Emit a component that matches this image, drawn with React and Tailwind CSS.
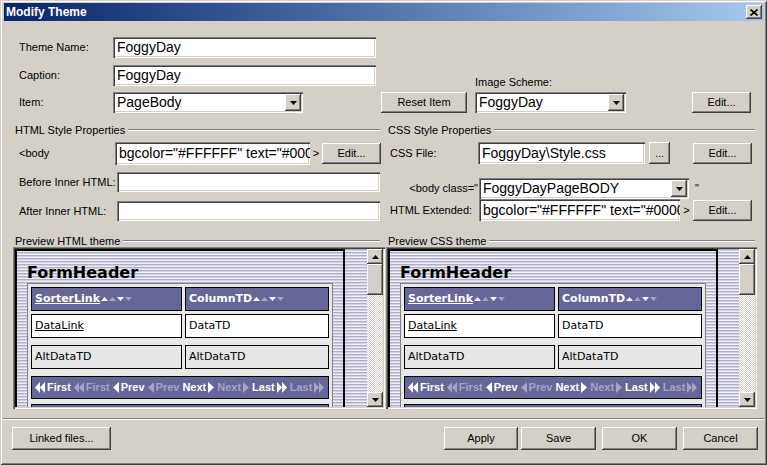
import React from 'react';

const raised =
  'bg-[#d4d0c8] shadow-[inset_-1px_-1px_0_#404040,inset_1px_1px_0_#ffffff,inset_-2px_-2px_0_#808080,inset_2px_2px_0_#d4d0c8]';
const sunken =
  'bg-white shadow-[inset_1px_1px_0_#808080,inset_2px_2px_0_#404040,inset_-1px_-1px_0_#ffffff,inset_-2px_-2px_0_#d4d0c8]';

const WHITE = '#ffffff';
const GRAY = '#a4a4c6';

function Button({ children, className = '' }) {
  return (
    <div className={`${raised} flex items-center justify-center text-[11px] text-black shrink-0 ${className}`}>
      {children}
    </div>
  );
}

function TextBox({ value = '', className = '' }) {
  return (
    <div className={`${sunken} flex items-center pl-[4px] overflow-hidden whitespace-nowrap text-[14px] text-black shrink-0 ${className}`}>
      {value}
    </div>
  );
}

function DownTri() {
  return (
    <svg width="7" height="4" viewBox="0 0 7 4">
      <polygon points="0,0 7,0 3.5,4" fill="#000" />
    </svg>
  );
}

function UpTri() {
  return (
    <svg width="7" height="4" viewBox="0 0 7 4">
      <polygon points="0,4 3.5,0 7,4" fill="#000" />
    </svg>
  );
}

function Select({ value, className = '' }) {
  return (
    <div className={`${sunken} flex items-center justify-between pl-[4px] text-[14px] text-black shrink-0 ${className}`}>
      <span className="whitespace-nowrap overflow-hidden">{value}</span>
      <div className={`${raised} w-[16px] h-[17px] mr-[2px] flex items-center justify-center`}>
        <DownTri />
      </div>
    </div>
  );
}

function GroupHeader({ title, className = '' }) {
  return (
    <div className={`flex items-center h-[12px] ${className}`}>
      <span className="text-[11px] leading-[12px] whitespace-nowrap">{title}</span>
      <div className="flex-1 ml-[3px] border-t border-t-[#808080] border-b border-b-white" />
    </div>
  );
}

function SortArrows() {
  return (
    <span className="flex items-center gap-[1px] ml-[1px]">
      <svg width="7" height="4" viewBox="0 0 7 4"><polygon points="0,4 3.5,0 7,4" fill={WHITE} /></svg>
      <svg width="7" height="4" viewBox="0 0 7 4"><polygon points="0,4 3.5,0 7,4" fill={GRAY} /></svg>
      <svg width="7" height="4" viewBox="0 0 7 4"><polygon points="0,0 7,0 3.5,4" fill={WHITE} /></svg>
      <svg width="7" height="4" viewBox="0 0 7 4"><polygon points="0,0 7,0 3.5,4" fill={GRAY} /></svg>
    </span>
  );
}

function DblLeft({ c }) {
  return (
    <svg width="10" height="11" viewBox="0 0 10 11">
      <polygon points="5,0 5,11 0,5.5" fill={c} />
      <polygon points="10,0 10,11 5,5.5" fill={c} />
    </svg>
  );
}
function DblRight({ c }) {
  return (
    <svg width="10" height="11" viewBox="0 0 10 11">
      <polygon points="0,0 0,11 5,5.5" fill={c} />
      <polygon points="5,0 5,11 10,5.5" fill={c} />
    </svg>
  );
}
function Left({ c }) {
  return (
    <svg width="6" height="11" viewBox="0 0 6 11">
      <polygon points="6,0 6,11 0,5.5" fill={c} />
    </svg>
  );
}
function Right({ c }) {
  return (
    <svg width="6" height="11" viewBox="0 0 6 11">
      <polygon points="0,0 0,11 6,5.5" fill={c} />
    </svg>
  );
}

function Scrollbar() {
  return (
    <div className="w-[16px] flex flex-col shrink-0">
      <div className={`${raised} h-[15px] flex items-center justify-center`}>
        <UpTri />
      </div>
      <div className={`${raised} h-[31px]`} />
      <div className="flex-1 bg-[image:repeating-conic-gradient(#d4d0c8_0_25%,#ffffff_0_50%)] bg-[length:2px_2px]" />
      <div className={`${raised} h-[15px] flex items-center justify-center`}>
        <DownTri />
      </div>
    </div>
  );
}

function Preview({ className = '' }) {
  return (
    <div className={`flex h-[162px] p-[2px] shadow-[inset_1px_1px_0_#808080,inset_2px_2px_0_#404040,inset_-1px_-1px_0_#ffffff,inset_-2px_-2px_0_#d4d0c8] ${className}`}>
      <div className="flex-1 overflow-hidden bg-[image:repeating-linear-gradient(180deg,#aeaecb_0px,#aeaecb_1px,#d2d2e2_1px,#d2d2e2_2px,#eeeef4_2px,#eeeef4_3px)]">
        <div className="w-[330px] h-[220px] border-2 border-black border-b-0 px-[10px] pt-[11px] font-['DejaVu_Sans',Verdana,sans-serif]">
          <div className="text-[16px] leading-[21px] font-bold text-black">FormHeader</div>
          <div className="w-[306px] border border-[#808080] bg-[#e8e8e8] p-[3px] text-[11px]">
            <div className="flex gap-[3px]">
              <div className="w-[151px] h-[24px] border border-black bg-[#666699] flex items-center pl-[3px] text-white font-bold">
                <span className="underline">SorterLink</span>
                <SortArrows />
              </div>
              <div className="flex-1 h-[24px] border border-black bg-[#666699] flex items-center pl-[3px] text-white font-bold">
                <span>ColumnTD</span>
                <SortArrows />
              </div>
            </div>
            <div className="flex gap-[3px] mt-[3px]">
              <div className="w-[151px] h-[24px] border border-black bg-white flex items-center pl-[3px] text-black">
                <span className="underline">DataLink</span>
              </div>
              <div className="flex-1 h-[24px] border border-black bg-white flex items-center pl-[3px] text-black">DataTD</div>
            </div>
            <div className="flex gap-[3px] mt-[7px]">
              <div className="w-[151px] h-[24px] border border-black bg-[#e6e6e6] flex items-center pl-[3px] text-black">AltDataTD</div>
              <div className="flex-1 h-[24px] border border-black bg-[#e6e6e6] flex items-center pl-[3px] text-black">AltDataTD</div>
            </div>
            <div className="mt-[7px] h-[23px] border border-black bg-[#666699] flex items-center pl-[3px] gap-[3px] font-['Liberation_Sans',Arial,sans-serif] font-bold text-[11px]">
              <span className="flex items-center gap-[2px] text-white"><DblLeft c={WHITE} />First</span>
              <span className="flex items-center gap-[2px] text-[#a4a4c6]"><DblLeft c={GRAY} />First</span>
              <span className="flex items-center gap-[2px] text-white"><Left c={WHITE} />Prev</span>
              <span className="flex items-center gap-[2px] text-[#a4a4c6]"><Left c={GRAY} />Prev</span>
              <span className="flex items-center gap-[2px] text-white">Next<Right c={WHITE} /></span>
              <span className="flex items-center gap-[2px] text-[#a4a4c6]">Next<Right c={GRAY} /></span>
              <span className="flex items-center gap-[2px] text-white">Last<DblRight c={WHITE} /></span>
              <span className="flex items-center gap-[2px] text-[#a4a4c6]">Last<DblRight c={GRAY} /></span>
            </div>
            <div className="mt-[5px] h-[24px] border border-black bg-[#666699]" />
          </div>
        </div>
      </div>
      <Scrollbar />
    </div>
  );
}

export default function App() {
  return (
    <div className="relative w-[767px] h-[465px] overflow-hidden bg-[#d4d0c8] text-black font-['Liberation_Sans',Arial,sans-serif] shadow-[inset_1px_1px_0_#d4d0c8,inset_-1px_-1px_0_#404040,inset_2px_2px_0_#ffffff,inset_-2px_-2px_0_#808080]">
      {/* Title bar */}
      <div className="ml-[4px] mr-[3px] mt-[3px] h-[18px] bg-linear-to-r from-[#0a246a] to-[#a6caf0] flex items-center">
        <span className="ml-[2px] text-white font-bold text-[12px]">Modify Theme</span>
        <div className={`${raised} ml-auto mr-[2px] w-[16px] h-[14px] flex items-center justify-center`}>
          <svg width="8" height="7" viewBox="0 0 8 7">
            <path d="M0.5 0.5 L7.5 6.5 M7.5 0.5 L0.5 6.5" stroke="#000" strokeWidth="1.6" />
          </svg>
        </div>
      </div>

      {/* Top rows */}
      <div className="flex h-[21px] mt-[16px] items-center pl-[19px] text-[11px]">
        <span className="w-[94px] shrink-0">Theme Name:</span>
        <TextBox value="FoggyDay" className="w-[263px] h-[21px]" />
      </div>
      <div className="flex h-[21px] mt-[7px] items-center pl-[19px] text-[11px]">
        <span className="w-[94px] shrink-0">Caption:</span>
        <TextBox value="FoggyDay" className="w-[263px] h-[21px]" />
        <span className="ml-[99px] self-end mb-[-2px] leading-[12px]">Image Scheme:</span>
      </div>
      <div className="flex h-[21px] mt-[6px] items-center pl-[19px] text-[11px]">
        <span className="w-[94px] shrink-0">Item:</span>
        <Select value="PageBody" className="w-[190px] h-[21px]" />
        <Button className="ml-[78px] w-[86px] h-[21px]">Reset Item</Button>
        <Select value="FoggyDay" className="ml-[8px] w-[151px] h-[21px]" />
        <Button className="ml-[66px] w-[59px] h-[21px]">Edit...</Button>
      </div>

      {/* Style property sections */}
      <div className="flex mt-[11px] text-[11px]">
        <div className="w-[384px] shrink-0 flex flex-col">
          <GroupHeader title="HTML Style Properties" className="pl-[15px] pr-[4px]" />
          <div className="flex items-center mt-[6px] pl-[19px]">
            <span className="w-[96px] shrink-0">&lt;body</span>
            <TextBox value={'bgcolor="#FFFFFF" text="#0000'} className="w-[195px] h-[23px]" />
            <span className="w-[12px] text-center">&gt;</span>
            <Button className="w-[59px] h-[21px]">Edit...</Button>
          </div>
          <div className="flex items-center mt-[7px] pl-[19px]">
            <span className="w-[98px] shrink-0">Before Inner HTML:</span>
            <TextBox className="w-[263px] h-[20px]" />
          </div>
          <div className="flex items-center mt-[9px] pl-[19px]">
            <span className="w-[98px] shrink-0">After Inner HTML:</span>
            <TextBox className="w-[263px] h-[20px]" />
          </div>
          <GroupHeader title="Preview HTML theme" className="mt-[14px] pl-[15px] pr-[4px]" />
          <Preview className="ml-[13px] w-[372px]" />
        </div>

        <div className="w-[383px] shrink-0 flex flex-col">
          <GroupHeader title="CSS Style Properties" className="pl-[4px] pr-[12px]" />
          <div className="flex items-center mt-[6px] pl-[6px]">
            <span className="w-[88px] shrink-0">CSS File:</span>
            <TextBox value="FoggyDay\Style.css" className="w-[167px] h-[22px]" />
            <Button className="ml-[4px] w-[21px] h-[22px]">...</Button>
            <Button className="ml-[23px] w-[59px] h-[21px]">Edit...</Button>
          </div>
          <div className="flex items-center mt-[14px] pl-[25px]">
            <span className="w-[70px] shrink-0 text-right pr-[1px]">&lt;body class="</span>
            <Select value="FoggyDayPageBODY" className="w-[210px] h-[21px]" />
            <span className="ml-[6px]">"</span>
          </div>
          <div className="flex items-center pl-[6px]">
            <span className="w-[89px] shrink-0">HTML Extended:</span>
            <TextBox value={'bgcolor="#FFFFFF" text="#0000'} className="w-[201px] h-[22px]" />
            <span className="w-[13px] text-center">&gt;</span>
            <Button className="w-[59px] h-[21px]">Edit...</Button>
          </div>
          <GroupHeader title="Preview CSS theme" className="mt-[14px] pl-[4px] pr-[12px]" />
          <Preview className="ml-[2px] w-[371px]" />
        </div>
      </div>

      {/* Bottom separator and buttons */}
      <div className="mt-[9px] mx-[3px] border-t border-t-[#808080] border-b border-b-white" />
      <div className="flex mt-[7px] pl-[12px] pr-[9px]">
        <Button className="w-[99px] h-[23px]">Linked files...</Button>
        <div className="flex-1" />
        <Button className="w-[74px] h-[23px]">Apply</Button>
        <Button className="ml-[3px] w-[75px] h-[23px]">Save</Button>
        <Button className="ml-[6px] w-[75px] h-[23px]">OK</Button>
        <Button className="ml-[6px] w-[75px] h-[23px]">Cancel</Button>
      </div>
    </div>
  );
}
